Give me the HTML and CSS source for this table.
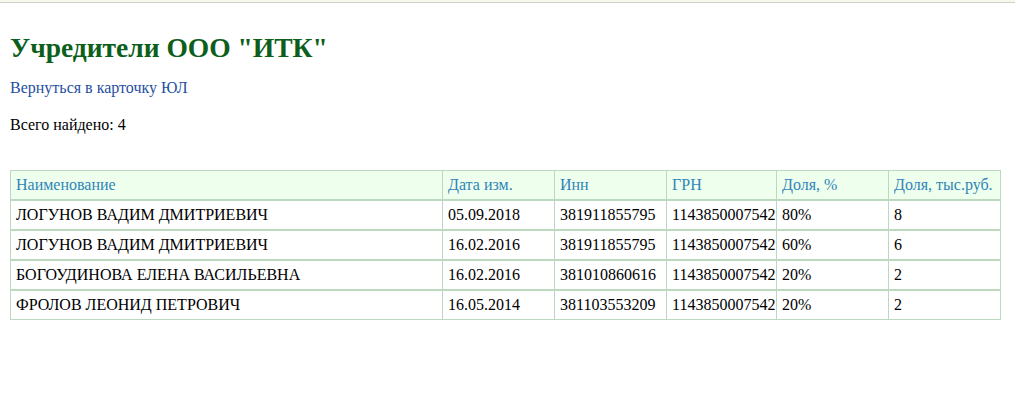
FILE: index.html
```html
<!DOCTYPE html>
<html lang="ru">
<head>
<meta charset="utf-8">
<title>Учредители ООО "ИТК"</title>
<link rel="stylesheet" href="styles.css">
</head>
<body>
<div class="topbar"></div>
<main class="page">
  <h1 class="title">Учредители ООО "ИТК"</h1>
  <p class="back"><a href="#" class="back-link">Вернуться в карточку ЮЛ</a></p>
  <p class="count">Всего найдено: 4</p>
  <table class="grid">
    <colgroup>
      <col class="c-name"><col class="c-date"><col class="c-inn"><col class="c-grn"><col class="c-pct"><col class="c-sum">
    </colgroup>
    <thead>
      <tr>
        <th>Наименование</th><th>Дата изм.</th><th>Инн</th><th>ГРН</th><th>Доля, %</th><th>Доля, тыс.руб.</th>
      </tr>
    </thead>
    <tbody>
      <tr><td>ЛОГУНОВ ВАДИМ ДМИТРИЕВИЧ</td><td>05.09.2018</td><td>381911855795</td><td>1143850007542</td><td>80%</td><td>8</td></tr>
      <tr><td>ЛОГУНОВ ВАДИМ ДМИТРИЕВИЧ</td><td>16.02.2016</td><td>381911855795</td><td>1143850007542</td><td>60%</td><td>6</td></tr>
      <tr><td>БОГОУДИНОВА ЕЛЕНА ВАСИЛЬЕВНА</td><td>16.02.2016</td><td>381010860616</td><td>1143850007542</td><td>20%</td><td>2</td></tr>
      <tr><td>ФРОЛОВ ЛЕОНИД ПЕТРОВИЧ</td><td>16.05.2014</td><td>381103553209</td><td>1143850007542</td><td>20%</td><td>2</td></tr>
    </tbody>
  </table>
</main>
</body>
</html>
```
FILE: styles.css
```css
html, body {
  margin: 0;
  padding: 0;
  background: #ffffff;
}
body {
  font-family: "Liberation Serif", "Times New Roman", serif;
  font-size: 16px;
  color: #000;
}
.topbar {
  height: 2px;
  background: #f7f7ee;
  border-bottom: 1px solid #cfcfc8;
}
.page {
  padding: 0 15px 0 10px;
}
.title {
  margin: 29px 0 0;
  font-size: 27.5px;
  line-height: 32px;
  font-weight: bold;
  color: #0d5e1b;
}
.back {
  margin: 15px 0 0;
  line-height: 18px;
}
.back-link {
  color: #1f4fa0;
  text-decoration: none;
}
.count {
  margin: 19px 0 0;
  line-height: 18px;
}
.grid {
  margin-top: 36px;
  width: 990px;
  table-layout: fixed;
  border-collapse: collapse;
  border: 1px solid #bcd8bf;
}
.c-name { width: 432px; }
.c-date { width: 112px; }
.c-inn { width: 112px; }
.c-grn { width: 110px; }
.c-pct { width: 112px; }
.c-sum { width: 112px; }
.grid th,
.grid td {
  border-left: 1px solid #bcd8bf;
  border-bottom: 2px solid #bcd8bf;
  padding: 0 5px;
  height: 28px;
  text-align: left;
  vertical-align: middle;
  white-space: nowrap;
  overflow: hidden;
}
.grid th {
  background: #eeffee;
  font-weight: normal;
  color: #2f86b8;
}
.grid tbody tr:last-child td {
  border-bottom: 1px solid #bcd8bf;
}
```
